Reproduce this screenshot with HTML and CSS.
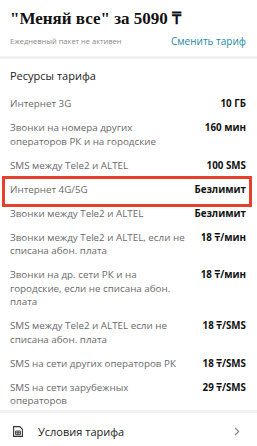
FILE: index.html
```html
<!DOCTYPE html>
<html lang="ru">
<head>
<meta charset="utf-8">
<link rel="stylesheet" href="styles.css">
</head>
<body>
<div class="header">
  <div class="title">"Меняй все" за 5090 ₸</div>
  <div class="subrow">
    <span class="sub">Ежедневный пакет не активен</span>
    <span class="link">Сменить тариф</span>
  </div>
</div>
<div class="divider"></div>
<div class="section">
  <div class="section-title">Ресурсы тарифа</div>
  <div class="rows">
    <div class="row"><span class="label">Интернет 3G</span><span class="value">10 ГБ</span></div>
    <div class="row"><span class="label">Звонки на номера других<br>операторов РК и на городские</span><span class="value">160 мин</span></div>
    <div class="row"><span class="label">SMS между Tele2 и ALTEL</span><span class="value">100 SMS</span></div>
    <div class="row hl"><span class="label">Интернет 4G/5G</span><span class="value">Безлимит</span></div>
    <div class="row"><span class="label">Звонки между Tele2 и ALTEL</span><span class="value">Безлимит</span></div>
    <div class="row"><span class="label">Звонки между Tele2 и ALTEL, если не<br>списана абон. плата</span><span class="value">18 ₸/мин</span></div>
    <div class="row"><span class="label">Звонки на др. сети РК и на<br>городские, если не списана абон.<br>плата</span><span class="value">18 ₸/мин</span></div>
    <div class="row"><span class="label">SMS между Tele2 и ALTEL если не<br>списана абон. плата</span><span class="value">18 ₸/SMS</span></div>
    <div class="row"><span class="label">SMS на сети других операторов РК</span><span class="value">18 ₸/SMS</span></div>
    <div class="row"><span class="label">SMS на сети зарубежных<br>операторов</span><span class="value">29 ₸/SMS</span></div>
  </div>
</div>
<div class="divider"></div>
<div class="terms">
  <svg class="sim" width="10" height="11" viewBox="0 0 10 11">
    <path d="M0.6 0.6 H6.8 L9.4 3.2 V10.4 H0.6 Z" fill="none" stroke="#333" stroke-width="1.1"/>
    <path d="M2.6 5 H7.4 V8.6 H2.6 Z M5 5 V8.6 M2.6 6.8 H7.4" fill="none" stroke="#333" stroke-width="0.9"/>
  </svg>
  <span class="terms-text">Условия тарифа</span>
  <svg class="chev" width="6" height="9" viewBox="0 0 6 9">
    <path d="M1.2 1 L4.6 4.5 L1.2 8" fill="none" stroke="#888" stroke-width="1.2"/>
  </svg>
</div>
</body>
</html>
```
FILE: styles.css
```css
html, body {
  margin: 0;
  padding: 0;
  background: #fff;
}
body {
  width: 257px;
  height: 446px;
  overflow: hidden;
  font-family: "Open Sans", "Noto Sans", sans-serif;
}
.header {
  padding: 9px 10px 8px 10px;
}
.title {
  font-family: "Liberation Serif", serif;
  font-weight: bold;
  font-size: 17px;
  line-height: 20px;
  color: #111;
}
.subrow {
  display: flex;
  justify-content: space-between;
  align-items: center;
  margin-top: 5px;
  line-height: 14px;
}
.sub {
  font-size: 7.5px;
  color: #8a8a8a;
}
.link {
  font-size: 10px;
  color: #1d8aa6;
  margin-right: 1px;
}
.divider {
  height: 3px;
  background: #f2f2f2;
}
.section {
  padding: 10px 11px 2.25px 10px;
}
.section-title {
  font-size: 11px;
  line-height: 14px;
  color: #222;
}
.rows {
  display: flex;
  flex-direction: column;
  gap: 10.5px;
  margin-top: 14.25px;
}
.row {
  display: flex;
  justify-content: space-between;
  align-items: flex-start;
  gap: 8px;
  line-height: 13.5px;
  font-size: 9.8px;
}
.label {
  color: #6a6a6a;
  white-space: nowrap;
  min-width: 0;
}
.value {
  color: #111;
  font-weight: bold;
  white-space: nowrap;
  flex-shrink: 0;
}
.hl {
  position: relative;
}
.hl::after {
  content: "";
  position: absolute;
  left: -8px;
  right: -6px;
  top: -7px;
  bottom: -11px;
  border: 3px solid #e5402b;
}
.terms {
  box-sizing: border-box;
  display: flex;
  align-items: center;
  height: 33px;
  padding: 3px 17px 0 13px;
}
.sim {
  display: block;
}
.terms-text {
  margin-left: 15px;
  font-size: 11px;
  color: #222;
  flex: 1;
}
.chev {
  display: block;
}
```
